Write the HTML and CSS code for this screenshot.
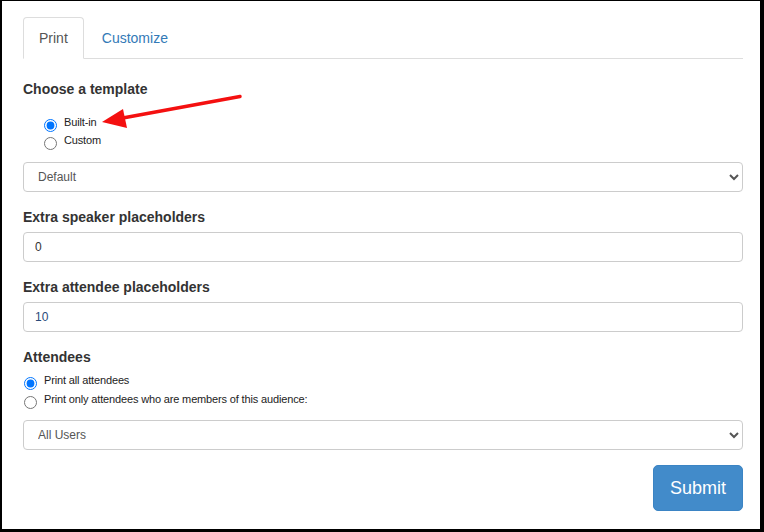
FILE: index.html
```html
<!DOCTYPE html>
<html>
<head>
<meta charset="utf-8">
<link rel="stylesheet" href="styles.css">
</head>
<body>
<div class="frame">
  <ul class="tabs">
    <li class="tab active">Print</li>
    <li class="tab link">Customize</li>
  </ul>

  <div class="heading h-first">Choose a template</div>
  <div class="radios indented">
    <label class="radio-row"><input type="radio" name="tpl" checked><span>Built-in</span></label>
    <label class="radio-row"><input type="radio" name="tpl"><span>Custom</span></label>
  </div>
  <select class="control sel-first"><option>Default</option></select>

  <div class="heading">Extra speaker placeholders</div>
  <input class="control text" type="text" value="0">

  <div class="heading">Extra attendee placeholders</div>
  <input class="control text blue" type="text" value="10">

  <div class="heading">Attendees</div>
  <div class="radios tall">
    <label class="radio-row"><input type="radio" name="att" checked><span>Print all attendees</span></label>
    <label class="radio-row"><input type="radio" name="att"><span>Print only attendees who are members of this audience:</span></label>
  </div>
  <select class="control sel-last"><option>All Users</option></select>

  <div class="actions"><button class="submit">Submit</button></div>

  <svg class="arrow" width="764" height="532" viewBox="0 0 764 532">
    <line x1="240" y1="96.5" x2="120" y2="118.5" stroke="#f41010" stroke-width="3.5" stroke-linecap="round"/>
    <polygon points="102,122 123,109 127,128" fill="#f41010"/>
  </svg>
</div>
</body>
</html>
```

FILE: styles.css
```css
html {
  background: #000;
}
body {
  margin: 0;
  width: 764px;
  height: 532px;
  background: #000;
  font-family: "Liberation Sans", Arial, sans-serif;
  color: #333;
}
.frame {
  position: relative;
  margin: 1px 0 0 2px;
  width: 758px;
  height: 528px;
  background: #fff;
  box-sizing: border-box;
  padding: 16px 17px 0 21px;
}
.tabs {
  list-style: none;
  margin: 0;
  padding: 0;
  display: flex;
  border-bottom: 1px solid #ddd;
}
.tab {
  font-size: 14px;
  line-height: 20px;
  padding: 10px 15px;
  margin-right: 2px;
  margin-bottom: -1px;
  border: 1px solid transparent;
  border-radius: 4px 4px 0 0;
}
.tab.active {
  color: #555;
  border-color: #ddd #ddd transparent #ddd;
  background: #fff;
}
.tab.link {
  color: #337ab7;
}
.heading {
  font-size: 14px;
  font-weight: bold;
  line-height: 20px;
  margin-top: 15px;
  margin-bottom: -1px;
  color: #333;
}
.heading.h-first {
  margin-top: 20px;
}
.radios {
  margin-top: 18px;
}
.radios.indented {
  padding-left: 21px;
}
.radio-row {
  display: flex;
  align-items: flex-start;
  height: 18px;
  font-size: 11px;
  line-height: 13px;
  letter-spacing: -0.15px;
  color: #222;
}
.radios.tall {
  margin-top: 7px;
  padding-left: 1px;
}
.radios.tall .radio-row {
  height: 19px;
}
.radio-row input {
  margin: 3px 7px 0 0;
  width: 13px;
  height: 13px;
}
.radios.tall .radio-row input {
  margin-top: 4px;
}
.radios.tall .radio-row span {
  margin-top: 1px;
}
.control {
  display: block;
  width: 100%;
  height: 30px;
  box-sizing: border-box;
  border: 1px solid #ccc;
  border-radius: 4px;
  background: #fff;
  font-family: "Liberation Sans", Arial, sans-serif;
  font-size: 12px;
  color: #555;
  margin-top: 6px;
}
select.control {
  padding: 0 8px 0 10px;
}
input.control {
  padding: 0 11px;
  color: #333;
}
input.control.blue {
  color: #2a4a7a;
}
.sel-first {
  margin-top: 10px;
}
.sel-last {
  margin-top: 9px;
}
.actions {
  display: flex;
  justify-content: flex-end;
  margin-top: 15px;
}
.submit {
  font-family: "Liberation Sans", Arial, sans-serif;
  font-size: 18px;
  line-height: 24px;
  padding: 10px 16px;
  color: #fff;
  background: #428bca;
  border: 1px solid #3b84c4;
  border-radius: 5px;
}
.arrow {
  position: absolute;
  left: -2px;
  top: -1px;
  pointer-events: none;
}
```
